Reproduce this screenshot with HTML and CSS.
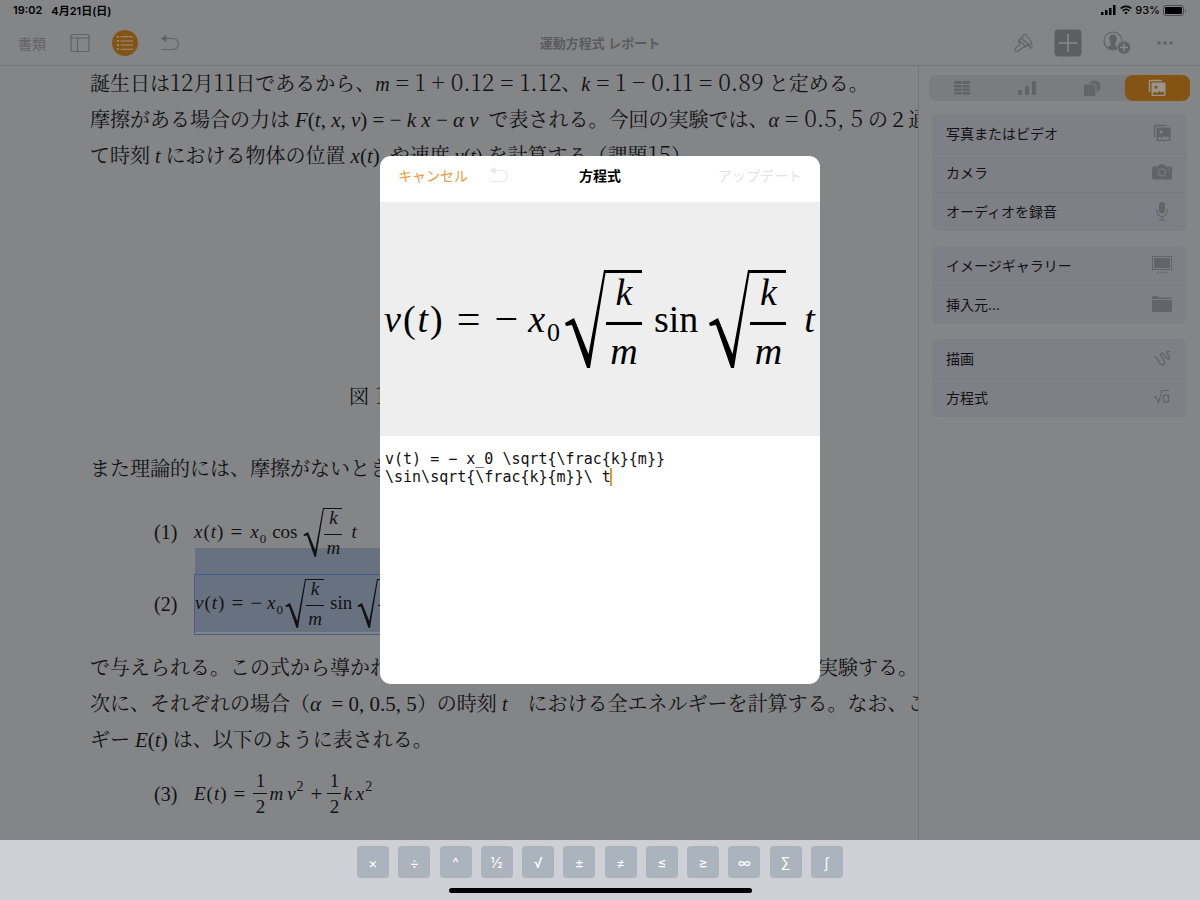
FILE: index.html
```html
<!DOCTYPE html>
<html lang="ja">
<head>
<meta charset="utf-8">
<meta name="viewport" content="width=device-width, initial-scale=1">
<title>運動方程式 レポート</title>
<link rel="stylesheet" href="styles.css">
</head>
<body>
<svg class="defs" aria-hidden="true">
  <symbol id="radical" viewBox="0 0 42 98" preserveAspectRatio="none">
    <path d="M1 53 L10 48 L24.500 84 L40 0 H42 V3 L41.500 3 L26 98 H23 L8 55 L2 56 Z" fill="currentColor"/>
  </symbol>
  <symbol id="undo" viewBox="0 0 20 20">
    <path d="M5 5.500h8a5.500 5.500 0 0 1 0 11H1.500" fill="none" stroke="currentColor" stroke-width="1.200"/>
    <path d="M0.500 5.500L6.500 2v7z" fill="currentColor"/>
  </symbol>
  <symbol id="photos" viewBox="0 0 18 18">
    <path d="M1.500 13V2.500a1 1 0 0 1 1-1H14" fill="none" stroke="currentColor" stroke-width="1.400"/>
    <path fill="currentColor" fill-rule="evenodd" d="M4.500 3.500h12a1 1 0 0 1 1 1v11.500a1 1 0 0 1-1 1h-12a1 1 0 0 1-1-1V4.500a1 1 0 0 1 1-1zM8 6.500a1.600 1.600 0 1 0 .01 0zM4.800 15.700h11.400v-2l-1.400-1.400-1.300 1.200-2-1.500-2.500 2-2-1.200-2.200 1.400z"/>
  </symbol>
</svg>

<header class="top">
  <div class="status">
    <span class="status-time">19:02</span>
    <span>4月21日(日)</span>
    <span class="status-right">
      <svg width="16" height="10" viewBox="0 0 16 10"><path d="M0 7h2.500v3H0zM4 5h2.500v5H4zM8 3h2.500v7H8zM12 0h2.500v10H12z"/></svg>
      <svg width="12" height="10" viewBox="0 0 12 10" fill="none" stroke="#000" stroke-width="1.700"><path d="M.7 3.500a7.600 7.600 0 0 1 10.600 0M2.700 5.800a4.700 4.700 0 0 1 6.600 0"/><path d="M4.300 7.500a2.600 2.600 0 0 1 3.400 0L6 9.500z" fill="#000" stroke="none"/></svg>
      <span>93%</span>
      <svg width="24" height="11" viewBox="0 0 24 11"><rect x=".5" y=".5" width="20" height="10" rx="2.500" fill="none" stroke="#4c4d4f"/><rect x="2" y="2" width="17" height="7" rx="1"/><path d="M22 3.500q1.500 2 0 4z" fill="#4c4d4f"/></svg>
    </span>
  </div>
  <nav class="toolbar">
    <div class="tools tools-left">
      <button class="tool docs">書類</button>
      <button class="tool" aria-label="表示"><svg width="20" height="20" viewBox="0 0 20 20" fill="none" stroke="currentColor" stroke-width="1.200"><rect x="1" y="1.500" width="18" height="17" rx="1.500"/><path d="M1 5h18M7.500 5v13.500"/></svg></button>
      <button class="tool round" aria-label="リスト"><svg width="18" height="16" viewBox="0 0 20 18" stroke="#959089" stroke-width="1.300"><path d="M5 2h14M5 6.700h14M5 11.300h14M5 16h14"/><path d="M1 2h2M1 6.700h2M1 11.300h2M1 16h2" stroke-width="2"/></svg></button>
      <button class="tool" aria-label="取り消す"><svg width="20" height="20"><use href="#undo"/></svg></button>
    </div>
    <h1 class="doc-title">運動方程式 レポート</h1>
    <div class="tools tools-right">
      <button class="tool" aria-label="フォーマット"><svg width="20" height="20" viewBox="0 0 20 20" fill="none" stroke="currentColor" stroke-width="1.100" stroke-linejoin="round" stroke-linecap="round"><path d="M6.500 6.500L11.500 1.500Q12.500 1 13.200 2L17 7q2 2.500 2 6.500c0 2.200-2.300 2.200-2.500.3L16.300 11l-5 3.500-1-.3-5.300 4c-2 1-4-1-2.700-3L6.800 11.500V10L5.500 8zM5.800 7.200l7 6.300M8 5l7.500 6.500"/></svg></button>
      <button class="tool insert" aria-label="挿入"><svg width="28" height="28" viewBox="0 0 28 28"><rect width="27" height="27" x=".5" y=".5" rx="4" fill="#5d5e60"/><path d="M5 14h18M14 5v18" stroke="#898a8c" stroke-width="1.500"/></svg></button>
      <button class="tool share" aria-label="共同制作"><svg width="28" height="24" viewBox="0 0 28 24"><circle cx="10" cy="10" r="9" fill="none" stroke="currentColor" stroke-width="1.200"/><path d="M10 3.500c-3.500 0-4 3-3.500 5.500.3 2 1.300 2.500 1.300 4.500 0 1.500-2 1.500-3.800 2.700 3 3.500 9 3.500 12 0-1.800-1.200-3.800-1.200-3.800-2.700 0-2 1-2.500 1.300-4.500C14 6.500 13.500 3.500 10 3.500z" fill="currentColor"/><circle cx="21" cy="16.500" r="7" fill="#848587"/><circle cx="21" cy="16.500" r="6.300" fill="currentColor"/><path d="M17 16.500h8M21 12.500v8" stroke="#898a8c" stroke-width="1.300"/></svg></button>
      <button class="tool more" aria-label="その他"><svg width="18" height="6" viewBox="0 0 18 6" fill="currentColor"><circle cx="3" cy="3" r="1.800"/><circle cx="9" cy="3" r="1.800"/><circle cx="15" cy="3" r="1.800"/></svg></button>
    </div>
  </nav>
</header>

<main class="workspace">
  <article class="page">
    <p class="line">誕生日は<span class="num">12</span>月<span class="num">11</span>日であるから、<i>m</i><span class="num"> = 1 + 0.12 = 1.12</span>、<i>k</i><span class="num"> = 1 − 0.11 = 0.89</span> と定める。</p>
    <p class="line">摩擦がある場合の力は <span class="f"><i>F</i>(<i>t</i>, <i>x</i>, <i>v</i>) = − <i>k x</i> − <i>α v</i></span>&nbsp; で表される。今回の実験では、<i>α</i><span class="num"> = 0.5, 5</span> の２通</p>
    <p class="line">て時刻 <i>t</i> における物体の位置 <span class="f"><i>x</i>(<i>t</i>)</span>&nbsp; や速度 <i>v</i>(<i>t</i>) を計算する（課題<span class="num">15</span>）</p>
    <p class="line caption">図<span class="num"> 1</span></p>
    <p class="line">また理論的には、摩擦がないとき</p>
    <div class="equations">
      <div class="eq"><span class="eq-no">(1)</span>
        <div class="math"><i>x</i><span>(</span><i>t</i><span>)</span><span class="op">=</span><i class="g7">x</i><small>0</small><span class="g6">cos</span><span class="root g6"><svg><use href="#radical"/></svg><span class="frac"><i>k</i><i>m</i></span></span><i class="g8">t</i></div>
      </div>
      <div class="eq"><span class="eq-no">(2)</span>
        <div class="math selected"><i>v</i><span>(</span><i>t</i><span>)</span><span class="op">=</span><span class="op">−</span><i class="g5">x</i><small>0</small><span class="root g1"><svg><use href="#radical"/></svg><span class="frac"><i>k</i><i>m</i></span></span><span class="g6">sin</span><span class="root g5"><svg><use href="#radical"/></svg><span class="frac"><i>k</i><i>m</i></span></span><i class="g8">t</i></div>
      </div>
    </div>
    <p class="line split"><span>で与えられる。この式から導かれる値を</span><span>実験する。</span></p>
    <p class="line">次に、それぞれの場合（<span class="f"><i>α</i>&nbsp; = 0, 0.5, 5</span>）の時刻 <i>t</i>&nbsp;&nbsp;&nbsp; における全エネルギーを計算する。なお、こ</p>
    <p class="line">ギー <span class="f"><i>E</i>(<i>t</i>)</span> は、以下のように表される。</p>
    <div class="eq"><span class="eq-no">(3)</span>
      <div class="math"><i>E</i><span>(</span><i>t</i><span>)</span><span class="op">=</span><span class="frac plain g7"><span>1</span><span>2</span></span><i class="g1">m</i><i class="g3">v</i><sup>2</sup><span class="op">+</span><span class="frac plain g5"><span>1</span><span>2</span></span><i class="g1">k</i><i class="g3">x</i><sup>2</sup></div>
    </div>
  </article>

  <aside class="panel">
    <div class="segments">
      <button class="segment" aria-label="表"><svg width="16" height="14" viewBox="0 0 16 14" fill="currentColor"><path d="M0 0h7.400v3H0zM8.400 0H16v3H8.400zM0 4h7.400v2.500H0zM8.400 4H16v2.500H8.400zM0 7.500h7.400V10H0zM8.400 7.500H16V10H8.400zM0 11h7.400v2.500H0zM8.400 11H16v2.500H8.400z"/></svg></button>
      <button class="segment" aria-label="グラフ"><svg width="20" height="14" viewBox="0 0 20 14" fill="currentColor"><rect x="1" y="9" width="4" height="5" rx="1"/><rect x="8" y="5" width="4" height="9" rx="1"/><rect x="15" y="0" width="4" height="14" rx="1"/></svg></button>
      <button class="segment" aria-label="図形"><svg width="18" height="17" viewBox="0 0 18 17" fill="currentColor"><circle cx="11.500" cy="6.500" r="6"/><rect x=".5" y="4" width="12.500" height="12.500" rx="1.500" stroke="#7b7c7f"/></svg></button>
      <button class="segment active" aria-label="メディア"><svg width="18" height="18"><use href="#photos"/></svg></button>
    </div>
    <div class="card">
      <button class="row">写真またはビデオ<svg width="18" height="18"><use href="#photos"/></svg></button>
      <button class="row">カメラ<svg width="20" height="16" viewBox="0 0 20 16"><path fill="currentColor" d="M2 2.500h4L7.500.5h5l1.500 2h4a2 2 0 0 1 2 2v9a2 2 0 0 1-2 2H2a2 2 0 0 1-2-2v-9a2 2 0 0 1 2-2z"/><circle cx="10" cy="8.500" r="3.700" fill="none" stroke="#7f8085"/><circle cx="16.500" cy="5.500" r=".8" fill="#7f8085"/></svg></button>
      <button class="row">オーディオを録音<svg width="20" height="20" viewBox="0 0 20 20" fill="none" stroke="currentColor" stroke-width="1.100"><rect x="7" y="1" width="6" height="11.500" rx="3" fill="currentColor" stroke="none"/><path d="M5 8v2.500a5 5 0 0 0 10 0V8M10 15.500V19M6.500 19h7"/></svg></button>
    </div>
    <div class="card">
      <button class="row">イメージギャラリー<svg width="20" height="18" viewBox="0 0 20 18"><rect x=".5" y=".5" width="19" height="13" fill="none" stroke="currentColor"/><rect x="2" y="2" width="16" height="10" fill="currentColor"/><path d="M5 16.500h10.500" stroke="currentColor" stroke-width="1.500" stroke-dasharray="1.500"/></svg></button>
      <button class="row">挿入元...<svg width="20" height="16" viewBox="0 0 20 16" fill="currentColor"><path d="M0 3V1.500A1.500 1.500 0 0 1 1.500 0h4l2 1.500h11A1.500 1.500 0 0 1 20 3zM0 4h20v10.500a1.500 1.500 0 0 1-1.500 1.500h-17A1.500 1.500 0 0 1 0 14.500z"/></svg></button>
    </div>
    <div class="card">
      <button class="row">描画<svg width="18" height="18" viewBox="0 0 18 18" fill="none" stroke="currentColor" stroke-width="1.400" stroke-linecap="round"><path d="M2 7.500C5 10 6.500 16 9.500 16 13.500 16 11 10 8.500 7.500 6.500 5 8.500 3 10.500 5c2.500 2.500 3.500 6 5.500 5 1.500-1.200-.5-3.500-1.500-5-1.300-2 .3-3.500 1.700-2.200"/></svg></button>
      <button class="row">方程式<svg width="18" height="16" viewBox="0 0 18 16" fill="none" stroke="currentColor" stroke-width="1.200"><path d="M1 8.500l1.700-1L5.500 14 9 1.500h7.500"/><path d="M15.500 5v8.500M15.500 8c-1-3-5.500-3-5.500 1.500s4.500 4.500 5.500 1.500"/></svg></button>
    </div>
  </aside>

  <section class="dialog" role="dialog" aria-labelledby="dialog-title">
    <header class="dialog-bar">
      <div class="dialog-left">
        <button class="cancel">キャンセル</button>
        <button class="dialog-undo" aria-label="取り消す"><svg width="20" height="20"><use href="#undo"/></svg></button>
      </div>
      <h2 id="dialog-title" class="dialog-title">方程式</h2>
      <button class="update" disabled>アップデート</button>
    </header>
    <div class="preview">
      <div class="math large"><i>v</i><span>(</span><i>t</i><span>)</span><span class="op">=</span><span class="op">−</span><i class="g5">x</i><small>0</small><span class="root g1"><svg><use href="#radical"/></svg><span class="frac"><i>k</i><i>m</i></span></span><span class="g6">sin</span><span class="root g5"><svg><use href="#radical"/></svg><span class="frac"><i>k</i><i>m</i></span></span><i class="g8">t</i></div>
    </div>
    <div class="editor">
      <textarea class="source" aria-label="方程式のソース" spellcheck="false">v(t) = − x_0 \sqrt{\frac{k}{m}}
\sin\sqrt{\frac{k}{m}}\ t</textarea>
      <span class="caret"></span>
    </div>
  </section>
</main>

<footer class="keyboard">
  <div class="keys">
    <button class="key">×</button><button class="key">÷</button><button class="key">^</button><button class="key">½</button><button class="key">√</button><button class="key">±</button><button class="key">≠</button><button class="key">≤</button><button class="key">≥</button><button class="key">∞</button><button class="key">∑</button><button class="key">∫</button>
  </div>
  <div class="home"></div>
</footer>
</body>
</html>
```

FILE: styles.css
```css
* { box-sizing: border-box; }
body {
  margin: 0;
  height: 100vh;
  display: grid;
  grid-template-rows: auto minmax(0, 1fr) auto;
  background: #848587;
  color: #111214;
  font-family: Inter, "Noto Sans CJK JP", sans-serif;
  overflow: hidden;
}
button {
  padding: 0;
  border: 0;
  background: none;
  color: inherit;
  font: inherit;
}
svg { display: block; flex: none; }
.defs { position: absolute; width: 0; height: 0; }

/* Status bar and toolbar */
.top { border-bottom: 1px solid #737476; color: #000; }
.status {
  display: flex;
  align-items: center;
  gap: 9px;
  height: 20px;
  padding: 0 13px;
  font-size: 11px;
  font-weight: 600;
}
.status-right {
  display: flex;
  align-items: center;
  gap: 3px;
  margin-left: auto;
  font-weight: 500;
}
.toolbar {
  display: grid;
  grid-template-columns: 1fr auto 1fr;
  align-items: center;
  height: 45px;
  padding: 0 18px;
  color: #616264;
}
.tools { display: flex; align-items: center; }
.tools-left { gap: 22px; }
.tools-right { gap: 21px; justify-content: flex-end; }
.docs { font-size: 14px; margin-right: 2px; }
.round {
  display: grid;
  place-items: center;
  width: 26px;
  height: 26px;
  border-radius: 50%;
  background: #845415;
}
.more { margin: 0 8px 0 4px; }
.doc-title { margin: 0; font-size: 13px; font-weight: 600; color: #5a5b5d; }

/* Document */
.workspace {
  position: relative;
  display: grid;
  grid-template-columns: minmax(0, 1fr) 282px;
}
.page {
  overflow: hidden;
  padding-left: 90px;
  white-space: nowrap;
  font-family: "Liberation Serif", "Noto Serif CJK JP", serif;
  font-size: 20px;
}
.line { margin: 0; height: 36px; line-height: 36px; }
.num { font-family: "Noto Serif CJK JP", serif; font-size: 23px; font-weight: 300; line-height: 1; }
.f { font-size: 21px; }
.split { display: flex; justify-content: space-between; }
.caption { margin: 205px 0 36px; padding-left: 259px; }
.equations { padding: 9px 0 10px; }
.eq { display: flex; align-items: center; height: 72px; padding-left: 64px; }
.eq-no { width: 40px; }

/* Formulas: --u is the drawing unit, doubled for the preview */
.math {
  --u: 1px;
  --rule: 1px;
  position: relative;
  display: flex;
  align-items: center;
  gap: var(--u);
  font-family: "Liberation Serif", serif;
  font-size: calc(19 * var(--u));
  line-height: calc(22 * var(--u));
}
.math.large { --u: 2px; --rule: 3px; }
.math > small {
  font-size: calc(13 * var(--u));
  padding-top: calc(14 * var(--u));
}
.math > sup {
  font-size: calc(14 * var(--u));
  line-height: calc(14 * var(--u));
  padding-bottom: calc(14 * var(--u));
}
.op { margin-left: calc(6 * var(--u)); font-size: calc(21 * var(--u)); }
.g1 { margin-left: var(--u); }
.g3 { margin-left: calc(3 * var(--u)); }
.g5 { margin-left: calc(4 * var(--u)); }
.g6 { margin-left: calc(5 * var(--u)); }
.g7 { margin-left: calc(7 * var(--u)); }
.g8 { margin-left: calc(8 * var(--u)); }
.root { display: flex; height: calc(49 * var(--u)); }
.root svg { width: calc(21 * var(--u)); height: 100%; }
.frac {
  display: grid;
  grid-template-rows: calc(26 * var(--u)) 1fr;
  width: calc(18 * var(--u));
  border-top: var(--rule) solid;
  line-height: calc(18 * var(--u));
}
.frac > * { display: grid; place-content: center; }
.frac > :first-child { padding-bottom: calc(6 * var(--u)); border-bottom: var(--rule) solid; }
.frac > :last-child { padding-top: calc(4 * var(--u)); }
.plain { grid-template-rows: 1fr 1fr; width: 14px; height: 52px; border-top: 0; }
.plain > :first-child { padding-bottom: 0; }
.plain > :last-child { padding-top: 0; }
.selected {
  height: 61px;
  width: 500px;
  padding-bottom: 2px;
  border: 1px solid #455b94;
  background: #68717f content-box;
}
.selected::before {
  content: "";
  position: absolute;
  z-index: -1;
  left: 0;
  right: 0;
  bottom: 100%;
  height: 27px;
  background: #68717f;
}

/* Insert panel */
.panel {
  border-left: 1px solid #747577;
  padding: 9px 10px;
  font-size: 14px;
}
.segments {
  display: flex;
  height: 26px;
  border-radius: 8px;
  background: #7b7c7f;
  color: #636467;
}
.segment { flex: 1; display: grid; place-items: center; }
.segment.active { border-radius: 8px; background: #845415; color: #989590; }
.card { margin: 13px 3px 15px; border-radius: 6px; background: #7f8085; }
.card + .card { margin-top: 0; }
.row {
  display: grid;
  grid-template-columns: 1fr 22px;
  align-items: center;
  width: 100%;
  height: 39px;
  padding: 0 14px 1px;
  text-align: left;
}
.row + .row { padding-bottom: 3px; border-top: 1px solid #7a7b80; }
.row svg { justify-self: center; color: #636467; }

/* Equation dialog */
.dialog {
  position: absolute;
  left: 50%;
  top: 90px;
  transform: translateX(-50%);
  display: grid;
  grid-template-rows: 46px 234px 1fr;
  width: 440px;
  height: 528px;
  overflow: hidden;
  border-radius: 11px;
  background: #fff;
  color: #000;
  font-size: 14px;
}
.dialog-bar {
  display: grid;
  grid-template-columns: 1fr auto 1fr;
  align-items: center;
  padding: 0 18px 8px;
}
.dialog-left { display: flex; align-items: center; gap: 21px; }
.cancel { color: #e99a3c; }
.dialog-undo { color: #e9e9e9; }
.dialog-title { margin: 0; font-size: 14px; font-weight: 700; }
.update { justify-self: end; color: #e2e2e2; }
.preview {
  display: flex;
  align-items: center;
  overflow: hidden;
  padding-left: 4px;
  background: #eee;
}
.editor {
  position: relative;
  display: grid;
  font-family: "DejaVu Sans Mono", monospace;
  font-size: 15px;
}
.source {
  width: 100%;
  padding: 14px 5px;
  border: 0;
  outline: 0;
  resize: none;
  background: none;
  color: #111;
  font: inherit;
  line-height: 18px;
}
.caret {
  position: absolute;
  left: calc(4px + 25ch);
  top: 32px;
  width: 2px;
  height: 18px;
  background: #e8952f;
}

/* Math key row */
.keyboard {
  display: flex;
  flex-direction: column;
  align-items: center;
  gap: 10px;
  height: 60px;
  padding-top: 6px;
  background: #cfd0d6;
}
.keys { display: flex; justify-content: space-between; width: 486px; }
.key {
  width: 32px;
  height: 32px;
  border-radius: 4px;
  background: #abb3bc;
  color: #fff;
  font-size: 14px;
}
.home { width: 303px; height: 5px; border-radius: 3px; background: #000; }
```
